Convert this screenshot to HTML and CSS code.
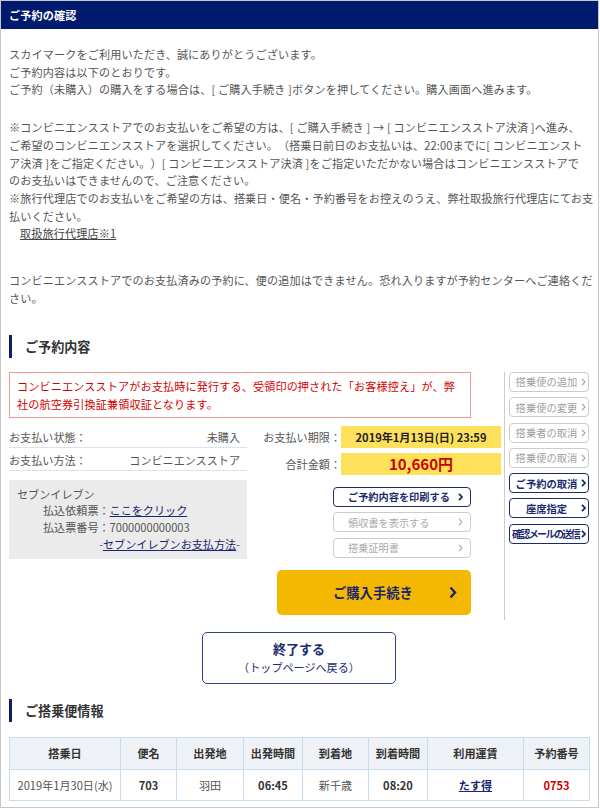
FILE: index.html
```html
<!DOCTYPE html>
<html lang="ja">
<head>
<meta charset="utf-8">
<title>ご予約の確認</title>
<link rel="stylesheet" href="styles.css">
</head>
<body>
<div class="page">
  <div class="titlebar">ご予約の確認</div>
  <div class="content">
    <p class="p1">スカイマークをご利用いただき、誠にありがとうございます。<br>ご予約内容は以下のとおりです。<br>ご予約（未購入）の購入をする場合は、[ ご購入手続き ]ボタンを押してください。購入画面へ進みます。</p>
    <p class="p2">※コンビニエンスストアでのお支払いをご希望の方は、[ ご購入手続き ] → [ コンビニエンスストア決済 ]へ進み、<br>ご希望のコンビニエンスストアを選択してください。（搭乗日前日のお支払いは、22:00までに[ コンビニエンスト<br>ア決済 ]をご指定ください。）[ コンビニエンスストア決済 ]をご指定いただかない場合はコンビニエンスストアで<br>のお支払いはできませんので、ご注意ください。<br>※旅行代理店でのお支払いをご希望の方は、搭乗日・便名・予約番号をお控えのうえ、弊社取扱旅行代理店にてお支払いください。<br><a class="agent">取扱旅行代理店※1</a></p>
    <p class="p3">コンビニエンスストアでのお支払済みの予約に、便の追加はできません。恐れ入りますが予約センターへご連絡ください。</p>

    <h2 class="sec-title">ご予約内容</h2>
    <div class="reserve">
      <div class="reserve-main">
        <div class="notice">コンビニエンスストアがお支払時に発行する、受領印の押された「お客様控え」が、弊社の航空券引換証兼領収証となります。</div>
        <div class="detail">
          <div class="detail-left">
            <div class="status-row"><span>お支払い状態：</span><span>未購入</span></div>
            <div class="status-row"><span>お支払い方法：</span><span>コンビニエンスストア</span></div>
            <div class="pay-box">
              <div>セブンイレブン</div>
              <div class="indent">払込依頼票：<a class="link">ここをクリック</a></div>
              <div class="indent">払込票番号：7000000000003</div>
              <div class="right">-<a class="link">セブンイレブンお支払方法</a>-</div>
            </div>
          </div>
          <div class="detail-right">
            <div class="sum-row"><span class="sum-label">お支払い期限：</span><span class="sum-val date">2019年1月13日(日) 23:59</span></div>
            <div class="sum-row second"><span class="sum-label">合計金額：</span><span class="sum-val price">10,660円</span></div>
            <div class="act-list">
              <a class="act on">ご予約内容を印刷する<svg class="chev" width="5" height="8" viewBox="0 0 5 8"><polyline points="1,0.8 4,4 1,7.2" fill="none" stroke="currentColor" stroke-width="1.8"/></svg></a>
              <a class="act">領収書を表示する<svg class="chev" width="5" height="8" viewBox="0 0 5 8"><polyline points="1,0.8 4,4 1,7.2" fill="none" stroke="currentColor" stroke-width="1.1"/></svg></a>
              <a class="act">搭乗証明書<svg class="chev" width="5" height="8" viewBox="0 0 5 8"><polyline points="1,0.8 4,4 1,7.2" fill="none" stroke="currentColor" stroke-width="1.1"/></svg></a>
            </div>
            <a class="buy">ご購入手続き<svg class="buy-chev" width="8" height="13" viewBox="0 0 8 13"><polyline points="1.5,1.5 6,6.5 1.5,11.5" fill="none" stroke="currentColor" stroke-width="2.4"/></svg></a>
          </div>
        </div>
      </div>
      <div class="reserve-side">
        <a class="side-btn">搭乗便の追加<svg class="chev" width="5" height="8" viewBox="0 0 5 8"><polyline points="1,0.8 4,4 1,7.2" fill="none" stroke="currentColor" stroke-width="1.1"/></svg></a>
        <a class="side-btn">搭乗便の変更<svg class="chev" width="5" height="8" viewBox="0 0 5 8"><polyline points="1,0.8 4,4 1,7.2" fill="none" stroke="currentColor" stroke-width="1.1"/></svg></a>
        <a class="side-btn">搭乗者の取消<svg class="chev" width="5" height="8" viewBox="0 0 5 8"><polyline points="1,0.8 4,4 1,7.2" fill="none" stroke="currentColor" stroke-width="1.1"/></svg></a>
        <a class="side-btn">搭乗便の取消<svg class="chev" width="5" height="8" viewBox="0 0 5 8"><polyline points="1,0.8 4,4 1,7.2" fill="none" stroke="currentColor" stroke-width="1.1"/></svg></a>
        <a class="side-btn on">ご予約の取消<svg class="chev" width="5" height="8" viewBox="0 0 5 8"><polyline points="1,0.8 4,4 1,7.2" fill="none" stroke="currentColor" stroke-width="1.8"/></svg></a>
        <a class="side-btn on">座席指定<svg class="chev" width="5" height="8" viewBox="0 0 5 8"><polyline points="1,0.8 4,4 1,7.2" fill="none" stroke="currentColor" stroke-width="1.8"/></svg></a>
        <a class="side-btn on tight">確認メールの送信<svg class="chev" width="5" height="8" viewBox="0 0 5 8"><polyline points="1,0.8 4,4 1,7.2" fill="none" stroke="currentColor" stroke-width="1.8"/></svg></a>
      </div>
    </div>

    <a class="end-btn"><span class="end-main">終了する</span><span class="end-sub">（トップページへ戻る）</span></a>

    <h2 class="sec-title second-title">ご搭乗便情報</h2>
    <table class="flight">
      <colgroup>
        <col style="width:111px"><col style="width:56px"><col style="width:67px"><col style="width:59px">
        <col style="width:66px"><col style="width:59px"><col style="width:96px"><col style="width:66px">
      </colgroup>
      <tr><th>搭乗日</th><th>便名</th><th>出発地</th><th>出発時間</th><th>到着地</th><th>到着時間</th><th>利用運賃</th><th>予約番号</th></tr>
      <tr><td>2019年1月30日(水)</td><td class="b">703</td><td>羽田</td><td class="b">06:45</td><td>新千歳</td><td class="b">08:20</td><td><a class="fare">たす得</a></td><td class="num">0753</td></tr>
    </table>
  </div>
</div>
</body>
</html>
```

FILE: styles.css
```css
* { box-sizing: border-box; }
html, body { margin: 0; padding: 0; background: #fff; }
body {
  font-family: "Noto Sans CJK JP", "Noto Sans", sans-serif;
  font-size: 11.1px;
  color: #555;
  text-spacing-trim: space-all;
}
a { color: inherit; text-decoration: none; }

.page {
  width: 599px;
  height: 808px;
  border: 1px solid #c8c8c8;
  overflow: hidden;
}
.titlebar {
  height: 28px;
  line-height: 28px;
  background: #001a6e;
  color: #fff;
  font-weight: bold;
  padding-left: 8px;
  letter-spacing: 0.15px;
}
.content { padding: 0 9px 0 8px; }

p { margin: 0 -8px 0 0; line-height: 17.7px; letter-spacing: 0.15px; }
.p1 { margin-top: 17px; }
.p2 { margin-top: 20px; }
.p3 { margin-top: 29px; }
.agent {
  display: inline-block;
  margin-left: 11px;
  text-decoration: underline;
  color: #444;
}

.sec-title {
  margin: 27.5px 0 0;
  height: 23px;
  line-height: 23px;
  border-left: 3px solid #0d1c6b;
  padding-left: 13px;
  font-size: 13.1px;
  font-weight: bold;
  color: #333;
}
.second-title { margin-top: 15px; }

.reserve { display: flex; margin-top: 14px; }
.reserve-main { width: 495px; padding-bottom: 5px; }
.reserve-side {
  width: 85px;
  border-left: 1px solid #ccc;
  padding-left: 4px;
  display: flex;
  flex-direction: column;
  gap: 5.3px;
}

.notice {
  width: 462px;
  border: 1px solid #f09a9a;
  color: #d40000;
  padding: 4px 10px 4px 7px;
  line-height: 18px;
  letter-spacing: 0.15px;
}

.detail { display: flex; margin-top: 7px; }
.detail-left { width: 238px; }
.status-row {
  display: flex;
  justify-content: space-between;
  height: 23px;
  padding-top: 2px;
  line-height: 20px;
  padding-right: 7px;
  border-bottom: 1px solid #d6e4f5;
}
.pay-box {
  margin-top: 9px;
  background: #ebebeb;
  padding: 5.6px 7px 6.6px 8px;
  line-height: 16.7px;
}
.pay-box .indent { padding-left: 26px; }
.pay-box .right { text-align: right; }
.link { color: #1a2470; text-decoration: underline; }

.detail-right { flex: 1; padding-top: 1px; }
.sum-row { display: flex; height: 22px; }
.sum-row.second { margin-top: 5.5px; }
.sum-label { width: 94px; text-align: right; line-height: 22px; }
.sum-val {
  width: 160px;
  background: #fde15a;
  text-align: center;
  font-weight: bold;
  line-height: 22px;
}
.date { color: #222; }
.price { color: #cc0000; font-size: 15px; }

.act-list {
  margin: 11.5px 0 0 86px;
  width: 138px;
  display: flex;
  flex-direction: column;
  gap: 5.5px;
}
.act {
  position: relative;
  display: flex;
  align-items: center;
  height: 20px;
  border: 1px solid #ccc;
  border-radius: 4px;
  padding-left: 14px;
  color: #aaa;
  font-size: 10.2px;
}
.act.on { border-color: #1a2b6d; color: #1a2b6d; font-weight: bold; }
.act .chev { position: absolute; right: 7px; top: 5px; }

.buy {
  position: relative;
  display: flex;
  align-items: center;
  margin: 12px 0 0 30px;
  width: 194px;
  height: 45px;
  padding-left: 56px;
  background: #f4b800;
  border-radius: 5px;
  color: #1a2370;
  font-weight: bold;
  font-size: 13.3px;
}
.buy-chev { position: absolute; right: 14px; top: 16px; }

.side-btn {
  position: relative;
  display: flex;
  align-items: center;
  justify-content: center;
  height: 20px;
  border: 1px solid #ccc;
  border-radius: 4px;
  padding-right: 5px;
  color: #a0a0a0;
  font-size: 10.3px;
}
.side-btn.on { border-color: #1a2b6d; color: #1a2b6d; font-weight: bold; }
.side-btn.tight { font-size: 10px; letter-spacing: -1.6px; padding-right: 7px; }
.side-btn .chev { position: absolute; right: 2px; top: 5px; }

.end-btn {
  display: flex;
  flex-direction: column;
  align-items: center;
  justify-content: center;
  width: 194px;
  height: 52px;
  margin: 12px auto 0;
  border: 1px solid #2e3f8c;
  border-radius: 5px;
  color: #1c2a6e;
}
.end-main { font-weight: bold; font-size: 13px; line-height: 18px; }
.end-sub { line-height: 18px; }

.flight {
  margin-top: 15px;
  width: 580px;
  border-collapse: collapse;
  table-layout: fixed;
}
.flight th, .flight td {
  border: 1px solid #c8dcf0;
  text-align: center;
  padding: 0;
}
.flight th { height: 32px; background: #eef1f5; color: #333; font-weight: bold; }
.flight td { height: 31px; }
.flight td.b { font-weight: bold; color: #333; }
.fare { color: #1a2470; font-weight: bold; text-decoration: underline; }
.flight td.num { color: #cc0000; font-weight: bold; }
```
